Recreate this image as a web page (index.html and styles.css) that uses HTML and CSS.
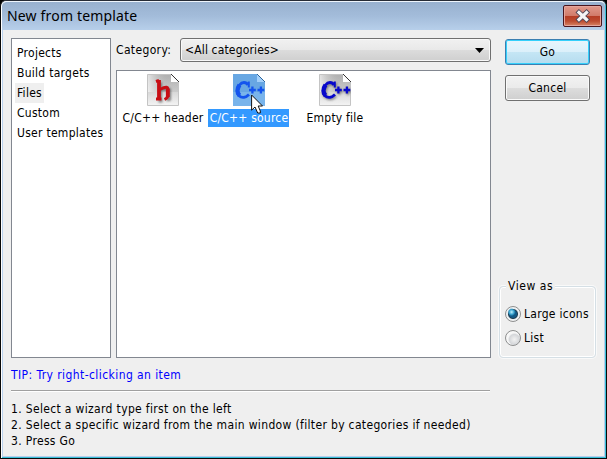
FILE: index.html
```html
<!DOCTYPE html>
<html lang="en">
<head>
<meta charset="utf-8">
<title>New from template</title>
<link rel="stylesheet" href="styles.css">
</head>
<body>
<div class="window">
  <header class="titlebar">
    <h1>New from template</h1>
    <button class="close" aria-label="Close">
      <svg width="16" height="14" viewBox="0 0 16 14"><path d="M4 3.500 L11.500 10.500 M11.500 3.500 L4 10.500" stroke="#4c4557" stroke-width="5" stroke-linecap="square"/><path d="M4 3.500 L11.500 10.500 M11.500 3.500 L4 10.500" stroke="#f5f5f5" stroke-width="3.200" stroke-linecap="square"/></svg>
    </button>
  </header>
  <main class="client">
    <div class="top">
      <ul class="types">
        <li><span>Projects</span></li>
        <li><span>Build targets</span></li>
        <li><span class="current">Files</span></li>
        <li><span>Custom</span></li>
        <li><span>User templates</span></li>
      </ul>
      <section class="middle">
        <div class="category">
          <span class="label">Category:</span>
          <div class="combo"><span>&lt;All categories&gt;</span><svg width="9" height="5" viewBox="0 0 9 5"><path d="M0 0H9L4.5 5Z"/></svg></div>
        </div>
        <div class="templates">
          <div class="item">
            <svg width="32" height="32" viewBox="0 0 32 32">
              <defs>
                <linearGradient id="paper" x1="0" y1="0" x2="0" y2="1"><stop offset="0" stop-color="#b5b5b5"/><stop offset=".45" stop-color="#d0d0d0"/><stop offset="1" stop-color="#f4f4f4"/></linearGradient>
                <linearGradient id="paper2" x1="0" y1="0" x2="1" y2="0"><stop offset="0" stop-color="#fff" stop-opacity=".6"/><stop offset=".65" stop-color="#999" stop-opacity=".2"/><stop offset="1" stop-color="#999" stop-opacity=".2"/></linearGradient>
                <filter id="soft" x="-30%" y="-30%" width="160%" height="160%"><feGaussianBlur stdDeviation="1"/></filter>
                <g id="cpp" fill="none"><path d="M15.800 7.500V13.500" stroke-width="2"/><path d="M15 11C13 7.500 9 7.800 6.500 11C3.500 14.800 3.500 19.500 6 21.800C9 24.500 13 23.500 16 20.500" stroke-width="2.800"/><path d="M6.500 11C4 14.500 4 19 6.500 21.500" stroke-width="4.500"/><path d="M16 16H22.800M19.400 12.500V19.500M24.500 16H31.300M27.900 12.500V19.500" stroke-width="2.300"/></g>
              </defs>
              <path d="M.5 .5H24L31.500 8V31.500H.5Z" fill="url(#paper)" stroke="#c4c4c4"/>
              <path d="M1 1H24L31 8V18H1Z" fill="url(#paper2)"/>
              <path d="M24 .5V8H31.500Z" fill="#fff"/><path d="M24 0L32 8" stroke="#333"/>
              <g fill="none" stroke-linejoin="round">
                <path d="M12 7V25M10 25.500H14M13 14H21V24H18" transform="translate(1.500 1.500)" stroke="#333" stroke-width="3" opacity=".55" filter="url(#soft)"/>
                <path d="M9 7.500L12 6.500M9 25H14.500M13 15.500L16 14Q20.800 12 20.800 15V21.500Q20.800 24 17.500 25.500" stroke="#c80e14" stroke-width="3"/>
                <path d="M12 6V25.500M20.800 14.500V23" stroke="#c80e14" stroke-width="3.800"/>
              </g>
            </svg>
            <span class="name">C/C++ header</span>
          </div>
          <div class="item">
            <svg width="32" height="32" viewBox="0 0 32 32">
              <path d="M0 0H24L32 8V32H0Z" fill="#79b4eb"/>
              <path d="M0 0H24L32 8V18H0Z" fill="#4b90d5" opacity=".35"/>
              <path d="M24 0V8H32Z" fill="#a3d0fb"/><path d="M24 0L32 8" stroke="#2c6399"/>
              <use href="#cpp" stroke="#1454ed"/>
            </svg>
            <span class="name selected">C/C++ source</span>
            <svg class="cursor" width="12" height="20" viewBox="0 0 12 20"><path d="M.6 1V16.200L4 13L6.700 19H9.300V17L7.200 12H11.500Z" fill="#fff" stroke="#111"/></svg>
          </div>
          <div class="item">
            <svg width="32" height="32" viewBox="0 0 32 32">
              <path d="M.5 .5H24L31.500 8V31.500H.5Z" fill="url(#paper)" stroke="#c4c4c4"/>
              <path d="M1 1H24L31 8V18H1Z" fill="url(#paper2)"/>
              <path d="M24 .5V8H31.500Z" fill="#fff"/><path d="M24 0L32 8" stroke="#333"/>
              <g transform="translate(1 1.500)" opacity=".5" filter="url(#soft)"><use href="#cpp" stroke="#333"/></g>
              <use href="#cpp" stroke="#0808cb"/>
            </svg>
            <span class="name">Empty file</span>
          </div>
        </div>
      </section>
      <aside class="side">
        <div class="buttons">
          <button class="btn primary">Go</button>
          <button class="btn">Cancel</button>
        </div>
        <div class="group">
          <span class="legend">View as</span>
          <div class="radio"><i class="dot on"></i><span>Large icons</span></div>
          <div class="radio"><i class="dot"></i><span>List</span></div>
        </div>
      </aside>
    </div>
    <p class="tip">TIP: Try right-clicking an item</p>
    <div class="rule"></div>
    <div class="help">
      <p>1. Select a wizard type first on the left</p>
      <p>2. Select a specific wizard from the main window (filter by categories if needed)</p>
      <p>3. Press Go</p>
    </div>
  </main>
</div>
</body>
</html>
```

FILE: styles.css
```css
* { box-sizing: border-box; margin: 0; padding: 0; }
body {
  width: 607px; height: 459px; overflow: hidden; background: #000;
  font: 12px/16px "DejaVu Sans Condensed", "DejaVu Sans", sans-serif;
  font-stretch: condensed; letter-spacing: .28px; color: #000;
}
svg { display: block; }
.window {
  width: 607px; height: 459px; border: 1px solid #080808; border-top-color: #262b35;
  border-radius: 6px 6px 0 0; background: #efefef;
  box-shadow: inset 1px 0 #fff, inset -1px -1px #36bed8, inset 2px 0 #bad2ee, inset -2px -2px #b9cde9;
}
.titlebar {
  height: 29px; margin: 0 1px; padding: 0 3px 0 5px; display: flex; justify-content: space-between;
  border-top: 1px solid #eef5fc; border-radius: 5px 5px 0 0;
  background: linear-gradient(#98b1cf, #a3bcda 50%, #b7cfea);
}
h1 { font: 14px/28px "Noto Sans", sans-serif; letter-spacing: .17px; }
.close {
  width: 39px; height: 22px; margin-top: 3px; display: grid; place-items: center;
  border: 1px solid #49151d; border-radius: 2px; box-shadow: inset 0 0 0 1px #e5a59c;
  background: linear-gradient(#e29a8c, #d17b6a 48%, #b53c24 50%, #bc4b30 75%, #d78666);
}
.client { padding: 8px 10px 0; }
.top { display: flex; height: 320px; }
.types { width: 100px; margin-right: 5px; padding: 4px 3px; border: 1px solid #828790; background: #fff; list-style: none; }
.types li { height: 20px; display: flex; }
.types span { padding: 0 2px; line-height: 20px; white-space: nowrap; }
.types .current { background: #efefef; }
.middle { width: 375px; display: flex; flex-direction: column; }
.category { height: 32px; display: flex; align-items: flex-start; }
.label { width: 64px; line-height: 24px; letter-spacing: .35px; }
.combo {
  width: 311px; height: 24px; padding: 0 6px 0 4px; display: flex; align-items: center; justify-content: space-between;
  border: 1px solid #707070; border-radius: 3px; box-shadow: inset 0 0 0 1px #f8f8f8; letter-spacing: .15px;
  background: linear-gradient(#f1f1f1, #e9e9e9 48%, #dcdcdc 50%, #cfcfcf);
}
.templates { flex: 1; display: flex; padding: 3px 3px; border: 1px solid #828790; background: #fff; }
.item { position: relative; width: 86px; display: flex; flex-direction: column; align-items: center; }
.name { height: 18px; margin: 3px 1px 0 0; padding: 0 1px 0 2px; line-height: 18px; white-space: nowrap; letter-spacing: .22px; }
.selected { background: #3399ff; color: #fff; }
.cursor { position: absolute; left: 45px; top: 20px; }
.side { width: 97px; margin-left: 8px; display: flex; flex-direction: column; justify-content: space-between; }
.buttons { padding: 1px 0 0 6px; display: flex; flex-direction: column; gap: 10px; }
.btn {
  width: 85px; height: 26px; font: inherit; letter-spacing: .25px; text-align: center;
  border: 1px solid #707070; border-radius: 3px; box-shadow: inset 0 0 0 1px #fafafa;
  background: linear-gradient(#f2f2f2, #ebebeb 48%, #dddddd 50%, #cfcfcf);
}
.primary {
  border-color: #3c7fb1; box-shadow: inset 0 0 0 1px #35d0fb;
  background: linear-gradient(#e8f5fc, #dcf0fa 48%, #c5e6f5 50%, #b5dcef);
}
.group {
  height: 72px; padding: 15px 0 0 5px; border: 1px solid #d5dfe5; border-radius: 4px;
  box-shadow: inset 0 0 0 1px #fff, 0 0 0 1px #f9f9f9; position: relative;
}
.legend { position: absolute; left: 6px; top: -9px; padding: 0 2px; background: #efefef; letter-spacing: .55px; }
.radio { height: 24px; display: flex; align-items: center; gap: 3px; white-space: nowrap; }
.dot {
  width: 16px; height: 16px; border: 1px solid #8e8f8f; border-radius: 50%;
  background: radial-gradient(circle at 60% 60%, #f2f2f2 0, #d5d7da 5px, #f7f7f7 6.5px);
}
.on { background: radial-gradient(circle at 40% 36%, #c2f2ff 0, #35a0cd 2.5px, transparent 4px), radial-gradient(circle, #125a87 0 3.5px, #203d51 4.5px, #e9eef1 5.5px, #f5f5f5 7px); }
.tip { margin-top: 9px; color: #0000ff; letter-spacing: .42px; }
.rule { width: 479px; height: 2px; margin-top: 7px; border-top: 1px solid #a0a0a0; border-bottom: 1px solid #fff; }
.help { margin-top: 9px; white-space: nowrap; letter-spacing: .34px; }
```
